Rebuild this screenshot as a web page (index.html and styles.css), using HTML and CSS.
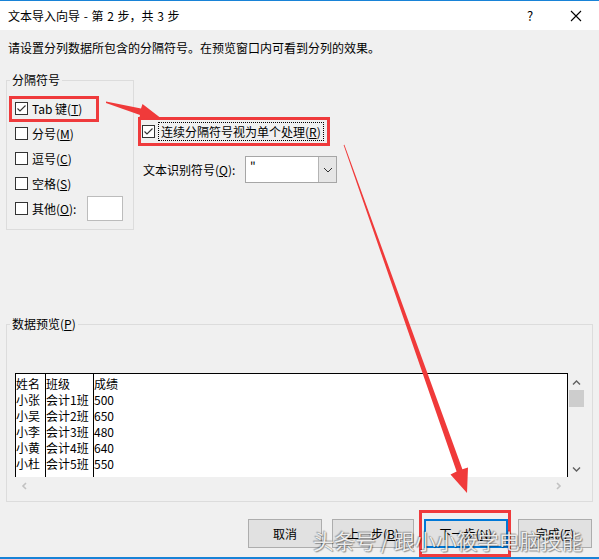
FILE: index.html
```html
<!DOCTYPE html>
<html lang="zh-CN">
<head>
<meta charset="utf-8">
<title>文本导入向导</title>
<link rel="stylesheet" href="styles.css">
</head>
<body>
<div class="window">
  <div class="titlebar">
    <span class="title">文本导入向导 - 第 2 步，共 3 步</span>
    <span class="help">?</span>
    <span class="close"><svg width="12" height="12" viewBox="0 0 12 12"><path d="M1 1 L11 11 M11 1 L1 11" stroke="#000" stroke-width="1.1" fill="none"/></svg></span>
  </div>
  <div class="content">
    <div class="instruction">请设置分列数据所包含的分隔符号。在预览窗口内可看到分列的效果。</div>
    <div class="top">
      <div class="group delim">
        <div class="legend"><span>分隔符号</span></div>
        <div class="row"><span class="cb"><svg width="11" height="11" viewBox="0 0 11 11"><path d="M1.5 5.5 L4 8 L9.5 2.5" stroke="#333" stroke-width="1.1" fill="none"/></svg></span><span class="lbl">Tab 键(<u>T</u>)</span></div>
        <div class="row"><span class="cb"></span><span class="lbl">分号(<u>M</u>)</span></div>
        <div class="row"><span class="cb"></span><span class="lbl">逗号(<u>C</u>)</span></div>
        <div class="row"><span class="cb"></span><span class="lbl">空格(<u>S</u>)</span></div>
        <div class="row"><span class="cb"></span><span class="lbl">其他(<u>O</u>):</span><span class="textbox"></span></div>
      </div>
      <div class="options">
        <div class="row opt1"><span class="cb"><svg width="11" height="11" viewBox="0 0 11 11"><path d="M1.5 5.5 L4 8 L9.5 2.5" stroke="#333" stroke-width="1.1" fill="none"/></svg></span><span class="focus">连续分隔符号视为单个处理(<u>R</u>)</span></div>
        <div class="row opt2"><span class="qlabel">文本识别符号(<u>Q</u>):</span>
          <span class="combo"><span class="combo-val">"</span><span class="combo-btn"><svg width="10" height="6" viewBox="0 0 10 6"><path d="M1 1 L5 5 L9 1" stroke="#333" stroke-width="1" fill="none"/></svg></span></span>
        </div>
      </div>
    </div>
    <div class="group preview">
      <div class="legend"><span>数据预览(<u>P</u>)</span></div>
      <div class="grid">
        <div class="gridmain">
          <div class="sheet">
            <div class="col c1"><div>姓名</div><div>小张</div><div>小吴</div><div>小李</div><div>小黄</div><div>小杜</div></div>
            <div class="col c2"><div>班级</div><div>会计1班</div><div>会计2班</div><div>会计3班</div><div>会计4班</div><div>会计5班</div></div>
            <div class="col c3"><div>成绩</div><div>500</div><div>650</div><div>480</div><div>640</div><div>550</div></div>
          </div>
          <div class="hbar">
            <svg width="8" height="8" viewBox="0 0 8 8"><path d="M6 1 L3 4 L6 7" stroke="#c2c2c2" stroke-width="1.6" fill="none"/></svg>
            <svg width="8" height="8" viewBox="0 0 8 8"><path d="M2 1 L5 4 L2 7" stroke="#c2c2c2" stroke-width="1.6" fill="none"/></svg>
          </div>
        </div>
        <div class="vbar">
          <svg class="up" width="9" height="7" viewBox="0 0 9 7"><path d="M1 5.5 L4.5 2 L8 5.5" stroke="#606060" stroke-width="1.4" fill="none"/></svg>
          <div class="thumb"></div>
          <svg class="down" width="9" height="7" viewBox="0 0 9 7"><path d="M1 1.5 L4.5 5 L8 1.5" stroke="#606060" stroke-width="1.4" fill="none"/></svg>
        </div>
      </div>
    </div>
    <div class="buttons">
      <span class="btn b1">取消</span>
      <span class="btn b2">上一步(<u>B</u>)</span>
      <span class="btn b3 default">下一步(<u>N</u>)</span>
      <span class="btn b4">完成(<u>F</u>)</span>
    </div>
  </div>

  <div class="redbox rb1"></div>
  <div class="redbox rb2"></div>
  <div class="redbox rb3"></div>
  <svg class="arrows" width="599" height="559" viewBox="0 0 599 559">
    <polygon fill="#f03a3a" points="106,101.5 141,108.4 142.5,104 160,117.5 139,119.5 140,115 106,103"/>
    <polygon fill="#f03a3a" points="343.6,145 456.6,471.5 450.5,474.5 467,493 468,467.5 462.4,469.3 344.4,144.8"/>
  </svg>
  <div class="watermark">头条号 / 跟小小筱学电脑技能</div>
</div>
</body>
</html>
```
FILE: styles.css
```css
html, body {
  margin: 0;
  padding: 0;
}
body {
  font-family: "Noto Sans CJK SC", "Microsoft YaHei", sans-serif;
  font-size: 12px;
  color: #000;
  background: #f0f0f0;
}
u { text-decoration: underline; text-underline-offset: 1px; }

.window {
  position: relative;
  width: 599px;
  height: 559px;
  display: flex;
  flex-direction: column;
  overflow: hidden;
}

.titlebar {
  height: 29px;
  border-top: 1px solid #1883d7;
  background: #fff;
  display: flex;
  align-items: center;
  padding-left: 8px;
  flex: none;
}
.title { flex: 1; font-size: 12px; word-spacing: 1px; }
.help { width: 12px; text-align: center; font-size: 13px; margin-right: 34px; }
.close { width: 12px; height: 12px; margin-right: 17px; display: flex; }

.content {
  flex: 1;
  background: #f0f0f0;
  border-bottom: 2px solid #1883d7;
  display: flex;
  flex-direction: column;
}

.instruction {
  margin-top: 10px;
  padding-left: 8px;
  line-height: 16px;
}

.top {
  display: flex;
  margin-top: 24px;
  height: 150px;
}

.group {
  border: 1px solid #dcdcdc;
  box-sizing: border-box;
}
.legend {
  margin-top: -9px;
  margin-left: -8px;
  line-height: 16px;
  height: 16px;
  padding-left: 3px;
}
.legend span {
  background: #f0f0f0;
  padding: 0 2px;
}

.delim {
  margin-left: 6px;
  width: 128px;
  padding-left: 8px;
}
.delim .legend + .row { margin-top: 8px; }

.row {
  display: flex;
  align-items: center;
  height: 25px;
}
.cb {
  width: 13px;
  height: 13px;
  box-sizing: border-box;
  border: 1px solid #333;
  background: #fff;
  display: flex;
  align-items: center;
  justify-content: center;
  flex: none;
}
.lbl { margin-left: 4px; white-space: nowrap; }
.textbox {
  margin-left: 11px;
  width: 36px;
  height: 25px;
  box-sizing: border-box;
  border: 1px solid #bcbcbc;
  background: #fff;
}

.options {
  margin-left: 8px;
  padding-top: 41px;
}
.opt1 { height: 20px; }
.focus {
  margin-left: 3px;
  border: 1px dotted #000;
  padding: 0 2px;
  line-height: 17px;
  white-space: nowrap;
}
.opt2 {
  margin-top: 15px;
  height: 27px;
}
.qlabel {
  margin-left: 1px;
  width: 102px;
  white-space: nowrap;
}
.combo {
  width: 92px;
  height: 27px;
  box-sizing: border-box;
  border: 1px solid #a6a6a6;
  background: #fff;
  display: flex;
}
.combo-val {
  flex: 1;
  padding-left: 4px;
  line-height: 20px;
  font-size: 12px;
}
.combo-btn {
  width: 17px;
  background: #e6e6e6;
  border-left: 1px solid #b4b4b4;
  display: flex;
  align-items: center;
  justify-content: center;
}

.preview {
  margin-top: 94px;
  margin-left: 6px;
  width: 587px;
  height: 178px;
  padding: 0 0 0 8px;
}
.grid {
  margin-top: 41px;
  display: flex;
  width: 570px;
}
.gridmain {
  width: 553px;
  display: flex;
  flex-direction: column;
}
.sheet {
  height: 104px;
  box-sizing: border-box;
  background: #fff;
  border: 1px solid #000;
  border-bottom: none;
  display: flex;
  font-family: "Noto Sans CJK SC", "SimSun", sans-serif;
  font-size: 12px;
}
.col {
  padding-top: 2px;
  line-height: 16px;
  white-space: nowrap;
}
.c1 { width: 29px; border-right: 1px solid #000; }
.c2 { width: 47px; border-right: 1px solid #000; }
.c3 { flex: 1; }

.hbar {
  height: 17px;
  display: flex;
  align-items: center;
  justify-content: space-between;
  padding: 0 5px 0 5px;
}
.vbar {
  width: 17px;
  height: 104px;
  display: flex;
  flex-direction: column;
  align-items: center;
  padding-top: 6px;
  box-sizing: border-box;
}
.thumb {
  width: 15px;
  height: 17px;
  background: #cdcdcd;
  margin-top: 4px;
}
.down { margin-top: auto; margin-bottom: 4px; }

.buttons {
  margin-top: 17px;
  display: flex;
  justify-content: flex-end;
  gap: 10px;
  padding-right: 7px;
}
.btn {
  height: 29px;
  box-sizing: border-box;
  background: #e1e1e1;
  border: 1px solid #adadad;
  display: flex;
  align-items: center;
  justify-content: center;
  white-space: nowrap;
}
.b1 { width: 74px; }
.b2 { width: 82px; }
.b3 { width: 84px; }
.b4 { width: 74px; }
.default { border: 2px solid #0078d7; }

.redbox {
  position: absolute;
  border: 3px solid #ef3a3c;
  box-sizing: border-box;
}
.rb1 { left: 9px; top: 96px; width: 90px; height: 26px; }
.rb2 { left: 138px; top: 117px; width: 192px; height: 29px; }
.rb3 { left: 419px; top: 510px; width: 92px; height: 47px; }

.arrows {
  position: absolute;
  left: 0;
  top: 0;
  pointer-events: none;
}

.watermark {
  position: absolute;
  left: 313px;
  top: 527px;
  font-size: 21px;
  line-height: 26px;
  white-space: nowrap;
  color: rgba(255, 255, 255, 0.88);
  text-shadow: 1px 1px 1px rgba(0, 0, 0, 0.35), -1px -1px 1px rgba(0, 0, 0, 0.25), 0 0 1px rgba(0, 0, 0, 0.4);
}
```
